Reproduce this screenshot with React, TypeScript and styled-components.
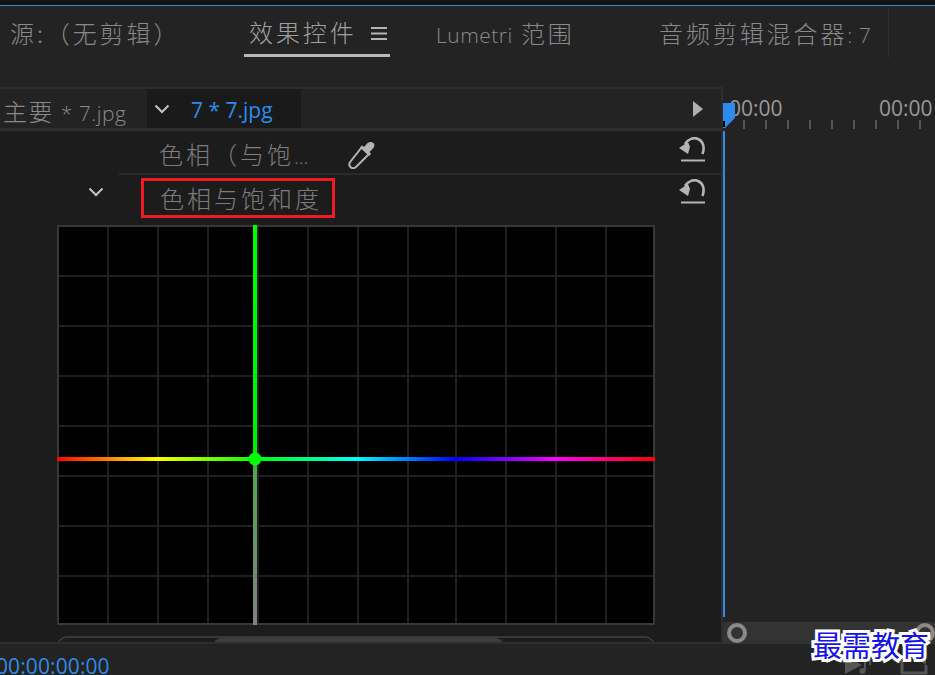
import styled, { createGlobalStyle } from "styled-components";

const GRID_X = [51, 101, 151, 201, 251, 301, 351, 399, 449, 499, 549, 597];
const GRID_Y = [51, 101, 151, 201, 251, 301, 351];
const TICKS = [0, 1, 2, 3, 4, 5, 6, 7, 8];

export default function App() {
  return (
    <Page>
      <GlobalStyle />
      <TopEdge />
      <TabBar>
        <Tab>源:（无剪辑）</Tab>
        <ActiveTab>
          效果控件
          <MenuIcon />
        </ActiveTab>
        <Tab $pad={46}>
          <Latin>Lumetri</Latin> 范围
        </Tab>
        <LastTab>
          音频剪辑混合器<Latin>: 7</Latin>
        </LastTab>
      </TabBar>

      <Body>
        <EffectsPanel>
          <ClipRow>
            <MasterClip>
              主要 <Latin>* 7.jpg</Latin>
            </MasterClip>
            <SelectedClip>
              <Chevron />
              <SelectedName>7 * 7.jpg</SelectedName>
            </SelectedClip>
            <Spacer />
            <PlayArrow viewBox="0 0 12 16">
              <path d="M1 0 L11 8 L1 16 Z" fill="#b0b0b0" />
            </PlayArrow>
          </ClipRow>

          <EffectRow>
            <RowName>
              <MutedName>
                色相（与饱<Dots>...</Dots>
              </MutedName>
              <Dropper viewBox="0 0 28 28">
                <path d="M15 6 L22 13 L9 26 C7 27.500 5 27.500 3.500 26 C2 24.500 2 22.500 3.500 20.500 Z" fill="none" stroke="#b4b4b4" strokeWidth="2" />
                <path d="M13 6.500 L15 4.500 L17 6 L20.500 2 C22.500 0.500 25 0.500 26.500 2 C28 3.500 27.500 6 26 7.500 L22.500 11 L24 13 L22 15 Z" fill="#b4b4b4" />
              </Dropper>
            </RowName>
            <ResetIcon top={6} />
          </EffectRow>

          <ParamRow>
            <ChevronCell>
              <Chevron />
            </ChevronCell>
            <Highlighted>色相与饱和度</Highlighted>
            <ResetIcon top={1} />
          </ParamRow>

          <GraphWrap>
            <HueGraph />
          </GraphWrap>

          <ScrollTrack>
            <ScrollThumb />
          </ScrollTrack>
        </EffectsPanel>

        <Timeline>
          <Ruler>
            <RulerLabels>
              <RulerLabel>00:00</RulerLabel>
              <RulerLabel>00:00</RulerLabel>
            </RulerLabels>
            <RulerTicks>
              {TICKS.map((t) => (
                <Tick key={t} />
              ))}
            </RulerTicks>
            <PlayheadCap viewBox="0 0 12 25">
              <path d="M0 0 H12 V15 L2 25 H0 Z" fill="#2d8ceb" />
              <rect x="0" y="18" width="2" height="6" fill="#000" />
            </PlayheadCap>
          </Ruler>
          <TrackArea>
            <PlayLine />
          </TrackArea>
          <ZoomBar>
            <ZoomKnob />
            <ZoomKnob />
          </ZoomBar>
        </Timeline>
      </Body>

      <StatusBar>
        <Timecode>00:00:00:00</Timecode>
        <StatusIcons>
          <StatusIcon width="30" height="20" viewBox="0 0 30 20">
            <path d="M1 1 L18 10 L1 19 Z" fill="#555" />
            <path d="M21 1 V15 M21 1 C24 3 27 5 26 10" fill="none" stroke="#555" strokeWidth="2" />
            <circle cx="18.500" cy="16" r="3" fill="#555" />
          </StatusIcon>
          <StatusIcon width="28" height="18" viewBox="0 0 28 18">
            <path d="M2 3 V16 H26 V8 M2 3 H12" fill="none" stroke="#555" strokeWidth="3" />
            <path d="M15 0 H26 V8 Z" fill="#555" />
          </StatusIcon>
        </StatusIcons>
      </StatusBar>

      <Watermark>最需教育</Watermark>
    </Page>
  );
}

function Chevron() {
  return (
    <svg width="16" height="10" viewBox="0 0 16 10">
      <path d="M1.500 1.500 L8 8 L14.500 1.500" fill="none" stroke="#c4c4c4" strokeWidth="2" />
    </svg>
  );
}

function MenuIcon() {
  return (
    <MenuSvg viewBox="0 0 16 13">
      <path d="M0 1 H16 M0 6.500 H16 M0 12 H16" stroke="#b4b4b4" strokeWidth="2" />
    </MenuSvg>
  );
}

function ResetIcon({ top }: { top: number }) {
  return (
    <ResetSvg $top={top} viewBox="0 0 26 25">
      <path d="M6 7 C9 2 15 0 19 2 C24 4 26 10 23.500 17" fill="none" stroke="#b4b4b4" strokeWidth="2.600" />
      <path d="M0 11 L9 5 L11 10 L9 17 Z" fill="#b4b4b4" />
      <rect x="2" y="22.500" width="24" height="2" fill="#b4b4b4" />
    </ResetSvg>
  );
}

function HueGraph() {
  return (
    <GraphSvg viewBox="0 0 598 400">
      <defs>
        <linearGradient id="hue" x1="0" x2="1" y1="0" y2="0">
          <stop offset="0" stopColor="#ff0000" />
          <stop offset="0.167" stopColor="#ffff00" />
          <stop offset="0.333" stopColor="#00ff00" />
          <stop offset="0.5" stopColor="#00ffff" />
          <stop offset="0.667" stopColor="#0000ff" />
          <stop offset="0.833" stopColor="#ff00ff" />
          <stop offset="1" stopColor="#ff0000" />
        </linearGradient>
        <linearGradient id="sat" x1="0" x2="0" y1="0" y2="1">
          <stop offset="0" stopColor="#00ff00" />
          <stop offset="0.58" stopColor="#00f000" />
          <stop offset="0.59" stopColor="#4fa84f" />
          <stop offset="1" stopColor="#808080" />
        </linearGradient>
      </defs>
      <rect x="0" y="0" width="598" height="400" fill="#000" />
      {GRID_X.map((x) => (
        <line key={x} x1={x} x2={x} y1="0" y2="400" stroke="#1f1f1f" strokeWidth="2" />
      ))}
      {GRID_Y.map((y) => (
        <line key={y} x1="0" x2="598" y1={y} y2={y} stroke="#1f1f1f" strokeWidth="2" />
      ))}
      <rect x="1" y="1" width="596" height="398" fill="none" stroke="#383838" strokeWidth="2" />
      <rect x="196" y="0" width="4" height="400" fill="url(#sat)" />
      <rect x="0" y="232" width="598" height="4" fill="url(#hue)" />
      <circle cx="198" cy="234" r="6.500" fill="#00ff00" />
    </GraphSvg>
  );
}

const GlobalStyle = createGlobalStyle`
  html, body {
    margin: 0;
    padding: 0;
    background: #232323;
  }
`;

const Page = styled.div`
  position: relative;
  display: flex;
  flex-direction: column;
  width: 935px;
  height: 675px;
  overflow: hidden;
  background-color: #232323;
  color: #8a8a8a;
  font-family: "Noto Sans CJK SC", "Noto Sans", sans-serif;
`;

const TopEdge = styled.div`
  height: 5px;
  background-color: #141414;
  border-bottom: 1px solid #3f86cf;
`;

const TabBar = styled.div`
  display: grid;
  grid-template-columns: 244px 146px 270px 229px 1fr;
  height: 81px;
  font-size: 24px;
  letter-spacing: 2.900px;
  line-height: 54px;
`;

const Tab = styled.div<{ $pad?: number }>`
  height: 50px;
  padding-left: ${(p) => p.$pad ?? 10}px;
  white-space: nowrap;
  font-weight: 300;
`;

const ActiveTab = styled.div`
  display: flex;
  align-items: center;
  box-sizing: border-box;
  height: 51px;
  padding: 4px 0 0 5px;
  border-bottom: 3px solid #b8b8b8;
  color: #a0a0a0;
  white-space: nowrap;
  font-weight: 300;
`;

const LastTab = styled.div`
  box-sizing: border-box;
  height: 50px;
  margin-top: 2px;
  line-height: 50px;
  border-right: 1px solid #2e2e2e;
  white-space: nowrap;
  font-weight: 300;
  margin-left: -1px;
`;

const MenuSvg = styled.svg`
  width: 16px;
  height: 13px;
  margin: 2px 0 0 14px;
`;

const Latin = styled.span`
  font-family: "Open Sans", "Noto Sans", sans-serif;
  font-size: 21px;
  letter-spacing: 0.5px;
`;

const SelectedName = styled(Latin)`
  margin-top: 3px;
  letter-spacing: 0;
`;

const Body = styled.div`
  display: flex;
  height: 557px;
`;

const EffectsPanel = styled.section`
  box-sizing: border-box;
  display: flex;
  flex-direction: column;
  width: 723px;
  height: 557px;
  overflow: hidden;
  background-color: #1c1c1c;
  border-right: 2px solid #2d2d2d;
  border-bottom: 2px solid #2d2d2d;
`;

const ClipRow = styled.div`
  box-sizing: border-box;
  display: flex;
  align-items: stretch;
  height: 44px;
  flex-shrink: 0;
  background-color: #232323;
  border-top: 2px solid #2d2d2d;
  border-bottom: 3px solid #2d2d2d;
`;

const MasterClip = styled.div`
  width: 144px;
  padding-left: 3px;
  font-size: 24px;
  line-height: 44px;
  letter-spacing: 1.500px;
  font-weight: 300;
  white-space: nowrap;
`;

const SelectedClip = styled.div`
  display: flex;
  align-items: center;
  gap: 21px;
  box-sizing: border-box;
  width: 154px;
  padding-left: 7px;
  background-color: #1a1a1a;
  color: #2d8ceb;
`;

const Spacer = styled.div`
  flex: 1;
`;

const PlayArrow = styled.svg`
  width: 12px;
  height: 16px;
  align-self: center;
  margin-right: 17px;
`;

const EffectRow = styled.div`
  box-sizing: border-box;
  display: flex;
  align-items: flex-start;
  justify-content: space-between;
  height: 44px;
  flex-shrink: 0;
  margin-left: 119px;
  padding: 0 16px 0 40px;
  border-bottom: 2px solid #2a2a2a;
`;

const RowName = styled.div`
  display: flex;
  align-items: flex-start;
`;

const MutedName = styled.span`
  width: 188px;
  margin-top: 2px;
  font-size: 24px;
  line-height: 42px;
  letter-spacing: 3px;
  font-weight: 300;
  color: #7d7d7d;
  white-space: nowrap;
`;

const Dots = styled.span`
  font-family: "Open Sans", "Noto Sans", sans-serif;
  font-size: 20px;
  letter-spacing: 0;
`;

const Dropper = styled.svg`
  width: 28px;
  height: 28px;
  margin-top: 10px;
`;

const ResetSvg = styled.svg<{ $top: number }>`
  width: 26px;
  height: 25px;
  margin-top: ${(p) => p.$top}px;
`;

const ParamRow = styled.div`
  display: flex;
  align-items: flex-start;
  height: 50px;
  flex-shrink: 0;
  padding: 3px 16px 0 0;
  box-sizing: border-box;
`;

const ChevronCell = styled.div`
  display: flex;
  justify-content: flex-end;
  width: 104px;
  margin: 9px 37px 0 0;
`;

const Highlighted = styled.div`
  box-sizing: border-box;
  flex: 0 0 194px;
  height: 40px;
  margin-right: 344px;
  padding-left: 16px;
  border: 3px solid #ed1c24;
  font-size: 24px;
  line-height: 33px;
  letter-spacing: 3px;
  font-weight: 300;
  color: #7d7d7d;
  white-space: nowrap;
`;

const GraphWrap = styled.div`
  flex-shrink: 0;
  padding: 0 0 0 57px;
`;

const GraphSvg = styled.svg`
  display: block;
  width: 598px;
  height: 400px;
`;

const ScrollTrack = styled.div`
  box-sizing: border-box;
  width: 598px;
  height: 20px;
  margin: 11px 0 0 57px;
  padding-left: 153px;
  border: 2px solid #383838;
  border-radius: 10px 10px 0 0;
`;

const ScrollThumb = styled.div`
  width: 293px;
  height: 18px;
  border-radius: 10px 10px 0 0;
  background-color: #3e3e3e;
`;

const Timeline = styled.section`
  position: relative;
  display: flex;
  flex-direction: column;
  flex: 1;
  min-width: 0;
`;

const Ruler = styled.div`
  position: relative;
  height: 44px;
  flex-shrink: 0;
`;

const RulerLabels = styled.div`
  display: flex;
  gap: 93px;
  height: 33px;
  padding: 7px 0 0 6px;
  box-sizing: border-box;
  white-space: nowrap;
`;

const RulerLabel = styled.span`
  width: 57px;
  flex-shrink: 0;
  font-family: "Open Sans", "Noto Sans", sans-serif;
  font-size: 21px;
  line-height: 28px;
  color: #9a9a9a;
`;

const RulerTicks = styled.div`
  display: flex;
  gap: 20px;
  padding-left: 20px;
`;

const Tick = styled.span`
  width: 2px;
  height: 9px;
  background-color: #555;
`;

const PlayheadCap = styled.svg`
  position: absolute;
  left: 0;
  top: 16px;
  width: 12px;
  height: 25px;
`;

const TrackArea = styled.div`
  flex: 1;
`;

const PlayLine = styled.div`
  width: 2px;
  height: 486px;
  background-color: #2d8ceb;
`;

const ZoomBar = styled.div`
  box-sizing: border-box;
  display: flex;
  align-items: center;
  justify-content: space-between;
  height: 22px;
  flex-shrink: 0;
  padding: 0 0 0 4px;
  background-color: #333;
`;

const ZoomKnob = styled.span`
  box-sizing: border-box;
  width: 20px;
  height: 20px;
  border: 4px solid #8a8a8a;
  border-radius: 50%;
`;

const StatusBar = styled.div`
  display: flex;
  align-items: flex-end;
  justify-content: space-between;
  flex: 1;
  overflow: hidden;
`;

const Timecode = styled.div`
  margin: 0 0 -5px -4px;
  font-family: "Open Sans", "Noto Sans", sans-serif;
  font-size: 21px;
  line-height: 27px;
  letter-spacing: 0.1px;
  color: #2d8ceb;
`;

const StatusIcons = styled.div`
  display: flex;
  align-items: flex-end;
  gap: 26px;
  padding-right: 7px;
`;

const StatusIcon = styled.svg`
  display: block;
`;

const Watermark = styled.div`
  position: absolute;
  right: 6px;
  top: 625px;
  font-family: "Noto Sans CJK SC", sans-serif;
  font-size: 29px;
  font-weight: 400;
  line-height: 38px;
  color: #1414e6;
  -webkit-text-stroke: 6px #fff;
  paint-order: stroke fill;
`;
